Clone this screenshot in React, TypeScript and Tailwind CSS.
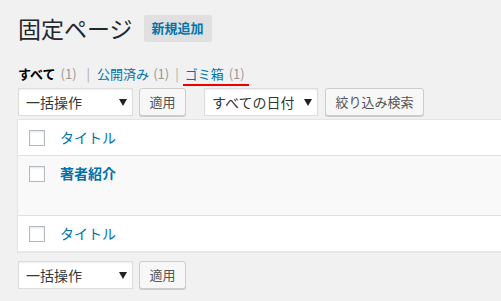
import React from 'react';

const font = { fontFamily: '"Noto Sans CJK JP", "Noto Sans", sans-serif' };

const Arrow = () => (
  <svg width="8" height="7" viewBox="0 0 8 7" className="shrink-0">
    <path d="M0 0 L8 0 L4 7 Z" fill="#222" />
  </svg>
);

const Select = ({ label, width }: { label: string; width: string }) => (
  <div
    className={`${width} h-[28px] ml-[1px] flex items-center justify-between pl-[7px] pr-[5px] bg-white border border-[#ddd] shadow-[inset_0_1px_2px_rgba(0,0,0,0.07)] text-[14px] text-[#32373c]`}
  >
    <span className="leading-none">{label}</span>
    <Arrow />
  </div>
);

const Button = ({ label, width }: { label: string; width: string }) => (
  <div
    className={`${width} h-[28px] flex items-center justify-center bg-[#f7f7f7] border border-[#ccc] rounded-[3px] shadow-[0_1px_0_#ccc] text-[13px] text-[#555]`}
  >
    {label}
  </div>
);

const Checkbox = () => (
  <div className="w-[16px] h-[16px] bg-white border border-[#b4b9be] shadow-[inset_0_1px_2px_rgba(0,0,0,0.1)]" />
);

export default function App() {
  return (
    <div className="w-[501px] h-[301px] overflow-hidden bg-[#f1f1f1]" style={font}>
      <div className="pl-[17px] pt-[13px]">
        <div className="flex items-center ml-[1px] h-[30px]">
          <h1 className="text-[23px] leading-[29px] text-[#23282d] font-normal">固定ページ</h1>
          <div className="ml-[11px] h-[27px] px-[8px] flex items-center bg-[#e0e0e0] rounded-[2px] text-[13px] font-bold text-[#0073aa]">
            新規追加
          </div>
        </div>

        <div className="mt-[22px] ml-[1px] flex items-center text-[13px] leading-[18px] h-[18px]">
          <span className="font-bold text-black">すべて</span>
          <span className="ml-[5px] text-[#999]">(1)</span>
          <span className="ml-[10px] mr-[7px] text-[#aaa]">|</span>
          <span className="text-[#0073aa]">公開済み</span>
          <span className="ml-[4px] text-[#999]">(1)</span>
          <span className="ml-[6px] mr-[6px] text-[#aaa]">|</span>
          <span className="relative">
            <span className="text-[#0073aa]">ゴミ箱</span>
            <span className="ml-[5px] text-[#999]">(1)</span>
            <span className="absolute left-[-2px] right-[-4px] top-[19px] h-[2px] bg-[#e00]" />
          </span>
        </div>

        <div className="mt-[5px] flex items-center">
          <Select label="一括操作" width="w-[115px]" />
          <div className="ml-[6px]">
            <Button label="適用" width="w-[47px]" />
          </div>
          <div className="ml-[17px]">
            <Select label="すべての日付" width="w-[114px]" />
          </div>
          <div className="ml-[7px]">
            <Button label="絞り込み検索" width="w-[99px]" />
          </div>
        </div>

        <div className="mt-[3px] w-[520px] bg-white border border-[#e5e5e5] shadow-[0_1px_1px_rgba(0,0,0,0.04)]">
          <div className="h-[36px] flex items-center border-b border-[#e1e1e1]">
            <div className="ml-[11px]"><Checkbox /></div>
            <span className="ml-[15px] text-[14px] text-[#0073aa]">タイトル</span>
          </div>
          <div className="h-[60px] flex items-start bg-[#f9f9f9] border-b border-[#e1e1e1]">
            <div className="ml-[11px] mt-[10px]"><Checkbox /></div>
            <span className="ml-[15px] mt-[7px] text-[14px] leading-[20px] font-bold text-[#0073aa]">著者紹介</span>
          </div>
          <div className="h-[35px] flex items-center">
            <div className="ml-[11px]"><Checkbox /></div>
            <span className="ml-[15px] text-[14px] text-[#0073aa]">タイトル</span>
          </div>
        </div>

        <div className="mt-[9px] flex items-center">
          <Select label="一括操作" width="w-[115px]" />
          <div className="ml-[6px]">
            <Button label="適用" width="w-[47px]" />
          </div>
        </div>
      </div>
    </div>
  );
}
